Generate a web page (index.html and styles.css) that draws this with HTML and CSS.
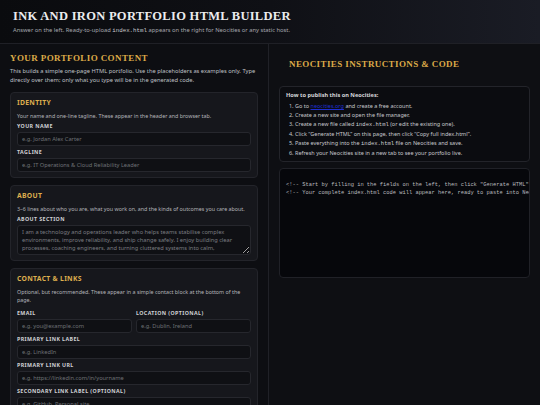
FILE: index.html
```html
<!DOCTYPE html>
<html lang="en">
<head>
<meta charset="utf-8">
<title>Ink and Iron Portfolio HTML Builder</title>
<link rel="stylesheet" href="styles.css">
</head>
<body>
<header class="top">
  <h1 class="title">Ink and Iron Portfolio HTML Builder</h1>
  <p class="subtitle">Answer on the left. Ready-to-upload <code>index.html</code> appears on the right for Neocities or any static host.</p>
</header>
<main class="layout">
  <section class="pane pane-left">
    <h2 class="pane-title">Your portfolio content</h2>
    <p class="intro">This builds a simple one-page HTML portfolio. Use the placeholders as examples only. Type directly over them; only what you type will be in the generated code.</p>

    <div class="card">
      <h3 class="card-title">Identity</h3>
      <p class="hint">Your name and one-line tagline. These appear in the header and browser tab.</p>
      <label class="field"><span class="label">Your name</span><input class="input" placeholder="e.g. Jordan Alex Carter"></label>
      <label class="field"><span class="label">Tagline</span><input class="input" placeholder="e.g. IT Operations &amp; Cloud Reliability Leader"></label>
    </div>

    <div class="card">
      <h3 class="card-title">About</h3>
      <p class="hint">3–6 lines about who you are, what you work on, and the kinds of outcomes you care about.</p>
      <label class="field"><span class="label">About section</span><textarea class="input area" placeholder="I am a technology and operations leader who helps teams stabilise complex environments, improve reliability, and ship change safely. I enjoy building clear processes, coaching engineers, and turning cluttered systems into calm, predictable platforms."></textarea></label>
    </div>

    <div class="card">
      <h3 class="card-title">Contact &amp; Links</h3>
      <p class="hint">Optional, but recommended. These appear in a simple contact block at the bottom of the page.</p>
      <div class="row">
        <label class="field"><span class="label">Email</span><input class="input" placeholder="e.g. you@example.com"></label>
        <label class="field"><span class="label">Location (optional)</span><input class="input" placeholder="e.g. Dublin, Ireland"></label>
      </div>
      <label class="field"><span class="label">Primary link label</span><input class="input" placeholder="e.g. LinkedIn"></label>
      <label class="field"><span class="label">Primary link URL</span><input class="input" placeholder="e.g. https://linkedin.com/in/yourname"></label>
      <label class="field"><span class="label">Secondary link label (optional)</span><input class="input" placeholder="e.g. GitHub, Personal site"></label>
    </div>
  </section>

  <section class="pane pane-right">
    <h2 class="pane-title right-title">Neocities instructions &amp; code</h2>
    <div class="steps">
      <p class="steps-title">How to publish this on Neocities:</p>
      <ol class="steps-list">
        <li>Go to <a href="#">neocities.org</a> and create a free account.</li>
        <li>Create a new site and open the file manager.</li>
        <li>Create a new file called <code>index.html</code> (or edit the existing one).</li>
        <li>Click “Generate HTML” on this page, then click “Copy full index.html”.</li>
        <li>Paste everything into the <code>index.html</code> file on Neocities and save.</li>
        <li>Refresh your Neocities site in a new tab to see your portfolio live.</li>
      </ol>
    </div>
    <pre class="code">&lt;!-- Start by filling in the fields on the left, then click "Generate HTML". --&gt;
&lt;!-- Your complete index.html code will appear here, ready to paste into Neocities. --&gt;</pre>
  </section>
</main>
</body>
</html>
```

FILE: styles.css
```css
* { box-sizing: border-box; }

html, body {
  margin: 0;
  height: 100%;
}

body {
  background: #0e0f13;
  color: #c4c5ca;
  font-family: "Noto Sans", "Open Sans", sans-serif;
  display: flex;
  flex-direction: column;
  overflow: hidden;
}

.top {
  height: 44px;
  padding: 9px 13px 0;
  background: linear-gradient(90deg, #0a0b0e 0%, #0f1015 50%, #1a1c25 100%);
  border-bottom: 1px solid #1f2026;
}

.title {
  margin: 0;
  font-family: "Liberation Serif", "DejaVu Serif", serif;
  font-weight: bold;
  font-size: 12.5px;
  line-height: 14px;
  letter-spacing: 0.3px;
  text-transform: uppercase;
  color: #ececee;
}

.subtitle {
  margin: 3px 0 0;
  font-size: 5.8px;
  line-height: 8px;
  color: #a4a6ac;
}

.subtitle code {
  font-family: "Liberation Mono", "DejaVu Sans Mono", monospace;
  font-size: 5.8px;
  color: #c8c9cd;
}

.layout {
  flex: 1;
  min-height: 0;
  display: grid;
  grid-template-columns: 269px 1fr;
}

.pane {
  overflow: hidden;
  padding: 8px 10px 10px;
}

.pane-left {
  border-right: 1px solid #202127;
  background: #0d0e12;
}

.pane-right {
  padding-left: 10px;
  background: #0e0f13;
}

.pane-title {
  margin: 0;
  font-family: "Liberation Serif", "DejaVu Serif", serif;
  font-weight: bold;
  font-size: 9px;
  line-height: 12px;
  letter-spacing: 0.4px;
  text-transform: uppercase;
  color: #dcaa48;
}

.right-title {
  margin: 6px 0 16px 10px;
}

.intro {
  margin: 3px 0 7px;
  font-size: 5.75px;
  line-height: 9px;
  color: #bfc0c5;
}

.card {
  background: #16171c;
  border: 1px solid #23242a;
  border-radius: 4px;
  padding: 5px 6px 5px;
  margin-bottom: 7px;
}

.card-title {
  margin: 0 0 4px;
  font-size: 6.8px;
  line-height: 10px;
  font-weight: bold;
  letter-spacing: 0.3px;
  text-transform: uppercase;
  color: #ddae4e;
}

.hint {
  margin: 0 0 3px;
  font-size: 5.35px;
  line-height: 8px;
  color: #b4b5ba;
}

.field {
  display: flex;
  flex-direction: column;
  margin-bottom: 3px;
}

.field:last-child { margin-bottom: 0; }

.label {
  font-size: 5.3px;
  line-height: 7px;
  font-weight: bold;
  letter-spacing: 0.4px;
  text-transform: uppercase;
  color: #cfd0d4;
  margin-bottom: 2px;
}

.input {
  display: block;
  width: 100%;
  height: 14px;
  margin: 0;
  padding: 0 4px;
  background: #0f1014;
  border: 1px solid #26272d;
  border-radius: 3px;
  font-family: "Noto Sans", "Open Sans", sans-serif;
  font-size: 5.7px;
  color: #d0d0d0;
  outline: none;
}

.input::placeholder { color: #6e7075; }

.area {
  height: 30px;
  padding: 2px 4px;
  line-height: 8px;
  resize: vertical;
  overflow: hidden;
}

.area::placeholder { color: #7a7c81; }

.row {
  display: grid;
  grid-template-columns: 1fr 1fr;
  gap: 4px;
  margin: 6px 0 3px;
}

.row .field { margin-bottom: 0; }

.steps {
  background: #0b0c10;
  border: 1px solid #23242a;
  border-radius: 4px;
  padding: 4px 6px 4px;
}

.steps-title {
  margin: 0 0 2px;
  font-size: 5.65px;
  line-height: 9px;
  font-weight: bold;
  color: #d6d7da;
}

.steps-list {
  margin: 0;
  padding-left: 9px;
  font-size: 5.5px;
  line-height: 8.9px;
  color: #c6c7cb;
}

.steps-list a {
  color: #1f2fd0;
  text-decoration: underline;
}

.steps-list code {
  font-family: "Liberation Mono", "DejaVu Sans Mono", monospace;
  font-size: 5.5px;
  color: #cfd0d3;
}

.code {
  margin: 6px 0 0;
  height: 110px;
  background: #06070b;
  border: 1px solid #202127;
  border-radius: 4px;
  padding: 12px 6px 6px;
  overflow: hidden;
  white-space: pre;
  font-family: "Liberation Mono", "DejaVu Sans Mono", monospace;
  font-size: 5.4px;
  line-height: 8px;
  color: #b9babe;
}
```
